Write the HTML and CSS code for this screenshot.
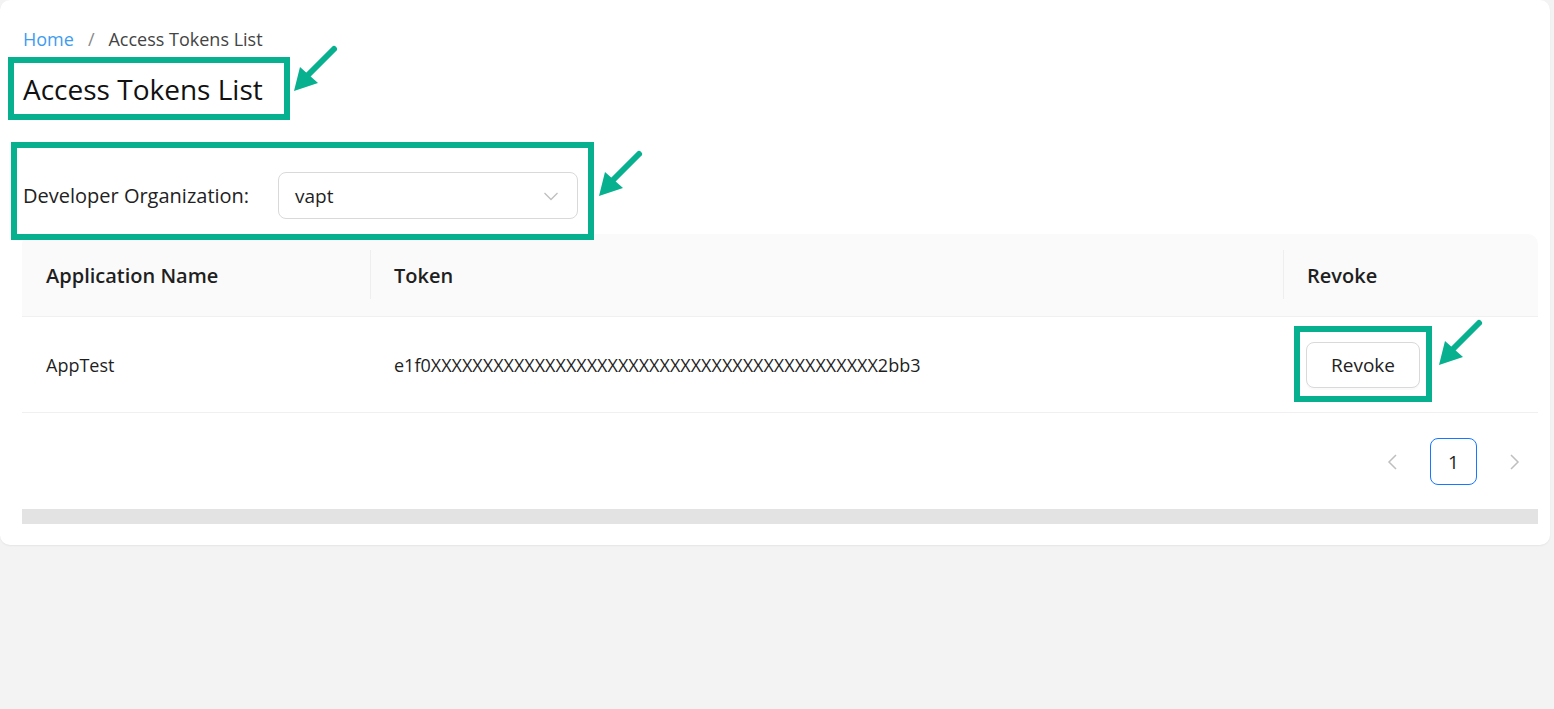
FILE: index.html
```html
<!DOCTYPE html>
<html lang="en">
<head>
    <meta charset="UTF-8">
    <title>Access Tokens List</title>
    <link rel="stylesheet" href="styles.css">
</head>
<body>
    <div class="card">
        <div class="breadcrumb">
            <a class="crumb-link" href="#">Home</a>
            <span class="crumb-sep">/</span>
            <span class="crumb-current">Access Tokens List</span>
        </div>
        <h1 class="title">Access Tokens List</h1>

        <div class="filter">
            <label class="filter-label">Developer Organization:</label>
            <div class="select">
                <span class="select-value">vapt</span>
                <svg class="select-arrow" width="16" height="16" viewBox="0 0 16 16"><path d="M1.5 5 L8 11.5 L14.5 5" fill="none" stroke="#bfbfbf" stroke-width="1.3"/></svg>
            </div>
        </div>

        <div class="table">
            <div class="thead">
                <div class="cell col-name">Application Name</div>
                <div class="cell col-token">Token</div>
                <div class="cell col-revoke">Revoke</div>
            </div>
            <div class="row">
                <div class="cell col-name">AppTest</div>
                <div class="cell col-token">e1f0XXXXXXXXXXXXXXXXXXXXXXXXXXXXXXXXXXXXXXXXXXX2bb3</div>
                <div class="cell col-revoke"><button class="btn">Revoke</button></div>
            </div>
        </div>

        <div class="pager">
            <svg class="pager-arrow" width="18" height="18" viewBox="0 0 18 18"><path d="M12 2 L5 9 L12 16" fill="none" stroke="#bfbfbf" stroke-width="1.5"/></svg>
            <div class="page-item">1</div>
            <svg class="pager-arrow" width="18" height="18" viewBox="0 0 18 18"><path d="M6 2 L13 9 L6 16" fill="none" stroke="#bfbfbf" stroke-width="1.5"/></svg>
        </div>

        <div class="scrollbar"></div>
    </div>

    <!-- annotation marks drawn over the screenshot -->
    <div class="mark mark-title"></div>
    <div class="mark mark-filter"></div>
    <div class="mark mark-revoke"></div>
    <svg class="arrow arrow-title" width="56" height="56" viewBox="0 0 56 56"><line x1="46" y1="8" x2="18" y2="36" stroke="#07b08f" stroke-width="6" stroke-linecap="round"/><polygon points="6,50 12,26 30,42" fill="#07b08f"/></svg>
    <svg class="arrow arrow-filter" width="56" height="56" viewBox="0 0 56 56"><line x1="46" y1="8" x2="18" y2="36" stroke="#07b08f" stroke-width="6" stroke-linecap="round"/><polygon points="6,50 12,26 30,42" fill="#07b08f"/></svg>
    <svg class="arrow arrow-revoke" width="56" height="56" viewBox="0 0 56 56"><line x1="46" y1="8" x2="18" y2="36" stroke="#07b08f" stroke-width="6" stroke-linecap="round"/><polygon points="6,50 12,26 30,42" fill="#07b08f"/></svg>
</body>
</html>
```

FILE: styles.css
```css
body {
    margin: 0;
    background: #f3f3f3;
    font-family: "Open Sans", "Noto Sans", sans-serif;
    color: #1f1f1f;
    height: 709px;
    overflow: hidden;
}
.card {
    background: #ffffff;
    width: 1550px;
    height: 545px;
    box-sizing: border-box;
    padding: 26px 12px 0 22px;
    border-radius: 10px;
    box-shadow: 0 1px 2px rgba(0, 0, 0, 0.06);
}
.breadcrumb {
    font-size: 18px;
    line-height: 26px;
    color: #444;
    display: flex;
    gap: 12px;
    padding-left: 1px;
}
.crumb-link {
    color: #3d9cf0;
    text-decoration: none;
}
.crumb-sep {
    color: #8a8a8a;
    padding: 0 2px;
}
.title {
    margin: 13px 0 0;
    font-size: 28px;
    font-weight: 400;
    line-height: 48px;
    color: #111;
    padding-left: 1px;
}
.filter {
    display: flex;
    align-items: center;
    margin-top: 59px;
    height: 47px;
}
.filter-label {
    font-size: 20px;
    width: 255px;
    padding-left: 1px;
    color: #222;
}
.select {
    width: 300px;
    height: 47px;
    box-sizing: border-box;
    border: 1px solid #d9d9d9;
    border-radius: 8px;
    display: flex;
    align-items: center;
    justify-content: space-between;
    padding: 0 18px 0 16px;
}
.select-value {
    font-size: 19px;
}
.table {
    margin-top: 15px;
    width: 1516px;
}
.thead, .row {
    display: flex;
    align-items: center;
}
.thead {
    height: 82px;
    background: #fafafa;
    border-radius: 10px 10px 0 0;
    border-bottom: 1px solid #f0f0f0;
    font-weight: 600;
    font-size: 20px;
}
.row {
    height: 95px;
    border-bottom: 1px solid #f0f0f0;
    font-size: 18px;
}
.cell {
    padding-left: 24px;
    box-sizing: border-box;
    position: relative;
}
.col-name { width: 348px; }
.col-token { width: 913px; }
.col-revoke { flex: 1; }
.thead .col-token::before,
.thead .col-revoke::before {
    content: "";
    position: absolute;
    left: 0;
    top: -12px;
    bottom: -10px;
    width: 1px;
    background: #eeeeee;
}
.btn {
    width: 114px;
    height: 46px;
    font-family: inherit;
    font-size: 19px;
    color: #222;
    background: #fff;
    border: 1px solid #d9d9d9;
    border-radius: 8px;
    box-shadow: 0 2px 0 rgba(0, 0, 0, 0.02);
    margin-left: -1px;
}
.pager {
    display: flex;
    align-items: center;
    justify-content: flex-end;
    gap: 28px;
    margin-top: 25px;
    width: 1516px;
    height: 47px;
    padding-right: 15px;
    box-sizing: border-box;
}
.page-item {
    width: 47px;
    height: 47px;
    box-sizing: border-box;
    border: 1px solid #1677ff;
    border-radius: 8px;
    display: flex;
    align-items: center;
    justify-content: center;
    font-size: 19px;
}
.scrollbar {
    margin-top: 24px;
    width: 1516px;
    height: 15px;
    background: #e3e3e3;
}
.mark {
    position: absolute;
    border: 6px solid #07b08f;
    box-sizing: border-box;
}
.mark-title { left: 8px; top: 57px; width: 282px; height: 63px; }
.mark-filter { left: 11px; top: 142px; width: 583px; height: 98px; }
.mark-revoke { left: 1294px; top: 326px; width: 138px; height: 76px; }
.arrow {
    position: absolute;
}
.arrow-title { left: 288px; top: 41px; }
.arrow-filter { left: 593px; top: 146px; }
.arrow-revoke { left: 1433px; top: 315px; }
```
